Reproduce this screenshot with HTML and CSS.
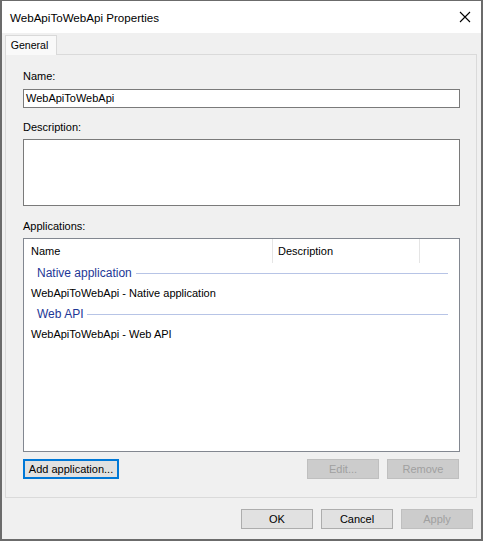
FILE: index.html
```html
<!DOCTYPE html>
<html>
<head>
<meta charset="utf-8">
<link rel="stylesheet" href="styles.css">
</head>
<body>
<div class="window">
  <div class="titlebar">
    <span class="title">WebApiToWebApi Properties</span>
    <svg class="close" width="12" height="12" viewBox="0 0 12 12"><path d="M1 1 L11 11 M11 1 L1 11" stroke="#000" stroke-width="1.1" fill="none"/></svg>
  </div>
  <div class="body">
    <div class="tabs"><div class="tab">General</div></div>
    <div class="panel">
      <div class="label">Name:</div>
      <div class="input">WebApiToWebApi</div>
      <div class="label label-desc">Description:</div>
      <div class="textarea"></div>
      <div class="label label-apps">Applications:</div>
      <div class="list">
        <div class="list-head">
          <div class="col col-name">Name</div>
          <div class="col col-desc">Description</div>
          <div class="col col-rest"></div>
        </div>
        <div class="group"><span>Native application</span><i class="rule"></i></div>
        <div class="item">WebApiToWebApi - Native application</div>
        <div class="group"><span>Web API</span><i class="rule"></i></div>
        <div class="item">WebApiToWebApi - Web API</div>
      </div>
      <div class="panel-buttons">
        <button class="btn btn-focus btn-add">Add application...</button>
        <span class="spacer"></span>
        <button class="btn btn-disabled">Edit...</button>
        <button class="btn btn-disabled">Remove</button>
      </div>
    </div>
    <div class="dialog-buttons">
      <button class="btn">OK</button>
      <button class="btn">Cancel</button>
      <button class="btn btn-disabled">Apply</button>
    </div>
  </div>
</div>
</body>
</html>
```
FILE: styles.css
```css
html, body {
  margin: 0;
  padding: 0;
  background: #ffffff;
}
body {
  font-family: "Liberation Sans", Arial, sans-serif;
  font-size: 11px;
  color: #000;
}
.window {
  box-sizing: border-box;
  width: 483px;
  height: 541px;
  border: 2px solid #6b6b6b;
  border-top-width: 1px;
  display: flex;
  flex-direction: column;
  background: #f0f0f0;
}
.titlebar {
  height: 32px;
  background: #fff;
  display: flex;
  align-items: center;
  padding: 0 10px 0 8px;
  flex-shrink: 0;
}
.title {
  font-size: 11.6px;
  flex: 1;
  padding-top: 1px;
}
.close {
  display: block;
  margin-top: -1px;
}
.body {
  flex: 1;
  display: flex;
  flex-direction: column;
  padding-top: 2px;
}
.tabs {
  display: flex;
  padding-left: 3px;
  height: 19px;
  position: relative;
  z-index: 1;
}
.tab {
  box-sizing: border-box;
  width: 52px;
  height: 20px;
  border: 1px solid #d9d9d9;
  border-bottom: none;
  background: #f9f9f9;
  font-size: 10.6px;
  text-align: center;
  line-height: 18px;
  padding-right: 3px;
}
.panel {
  box-sizing: border-box;
  height: 444px;
  margin: 0 4px 0 3px;
  border: 1px solid #dadada;
  padding: 15px 16px 0 17px;
  display: flex;
  flex-direction: column;
}
.label {
  height: 13px;
  line-height: 13px;
  margin-bottom: 6px;
}
.label-desc {
  margin-top: 13px;
  margin-bottom: 5px;
}
.label-apps {
  margin-top: 14px;
  margin-bottom: 5px;
}
.input {
  box-sizing: border-box;
  height: 19px;
  border: 1px solid #7a7a7a;
  background: #fff;
  line-height: 17px;
  padding-left: 2px;
}
.textarea {
  box-sizing: border-box;
  height: 67px;
  border: 1px solid #7a7a7a;
  background: #fff;
}
.list {
  box-sizing: border-box;
  height: 214px;
  border: 1px solid #828790;
  background: #fff;
}
.list-head {
  display: flex;
  height: 24px;
}
.col {
  box-sizing: border-box;
  height: 24px;
  line-height: 24px;
  padding-left: 7px;
  border-right: 1px solid #e5e5e5;
}
.col-name { width: 249px; }
.col-desc { width: 147px; padding-left: 5px; }
.col-rest { width: 0; border: none; }
.group {
  display: flex;
  align-items: center;
  height: 20px;
  padding: 0 11px 0 13px;
  color: #1e3796;
  font-size: 12px;
}
.group span {
  white-space: nowrap;
}
.rule {
  flex: 1;
  height: 1px;
  background: #b7c4e6;
  margin-left: 4px;
  margin-top: 1px;
}
.item {
  height: 21px;
  line-height: 21px;
  padding-left: 7px;
}
.panel-buttons {
  display: flex;
  margin-top: 7px;
  gap: 8px;
  padding-right: 1px;
}
.spacer {
  flex: 1;
}
.btn {
  box-sizing: border-box;
  width: 72px;
  height: 20px;
  padding: 0;
  margin: 0;
  border: 1px solid #adadad;
  background: #e1e1e1;
  font-family: "Liberation Sans", Arial, sans-serif;
  font-size: 11px;
  color: #000;
  line-height: 18px;
}
.btn-add {
  width: 96px;
}
.btn-focus {
  border-color: #0078d7;
  box-shadow: inset 0 0 0 1px #0078d7;
}
.btn-disabled {
  background: #cccccc;
  border-color: #bfbfbf;
  color: #a0a0a0;
}
.dialog-buttons {
  display: flex;
  justify-content: flex-end;
  gap: 8px;
  margin-top: 11px;
  padding-right: 8px;
}
```
